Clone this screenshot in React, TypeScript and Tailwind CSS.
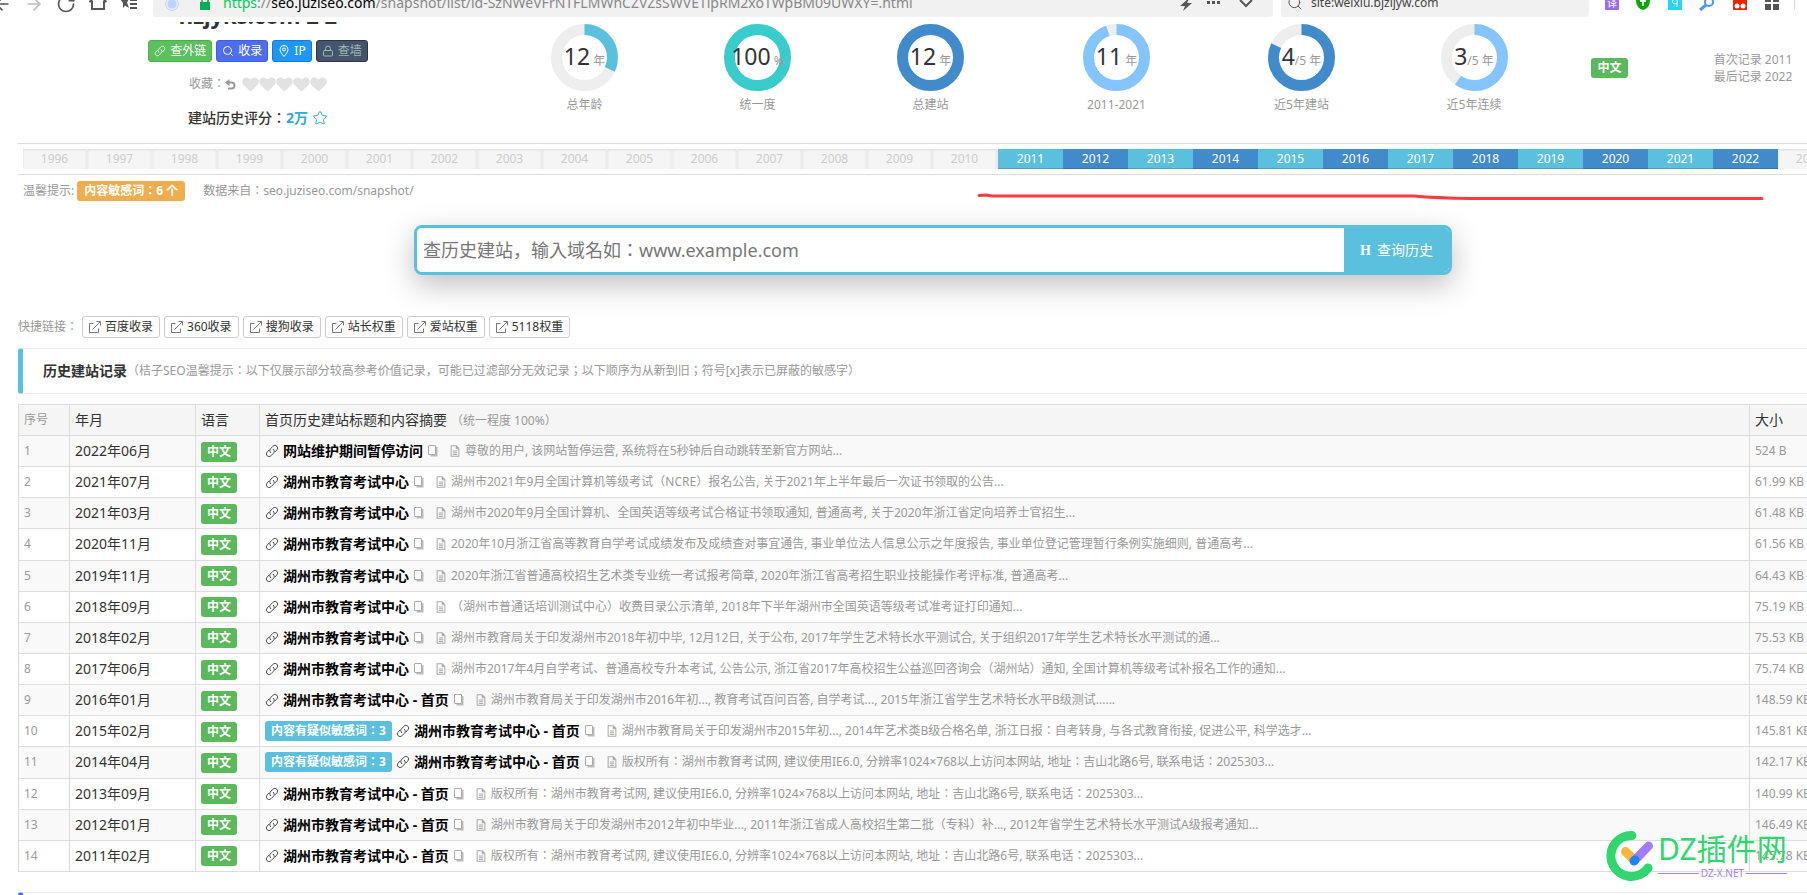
import type { ReactNode } from "react";
import { ArrowLeft, ArrowRight, RotateCw, Search, Lock, Star } from "lucide-react";

type Row = {
  date: string;
  title: string;
  text: string;
  size: string;
  flagged?: number;
};

const CENTER = "湖州市教育考试中心";
const CENTER_HOME = "湖州市教育考试中心 - 首页";
const COPYRIGHT =
  "版权所有：湖州市教育考试网, 建议使用IE6.0, 分辨率1024×768以上访问本网站, 地址：吉山北路6号, 联系电话：2025303...";

const rows: Row[] = [
  { date: "2022年06月", title: "网站维护期间暂停访问", text: "尊敬的用户, 该网站暂停运营, 系统将在5秒钟后自动跳转至新官方网站...", size: "524 B" },
  { date: "2021年07月", title: CENTER, text: "湖州市2021年9月全国计算机等级考试（NCRE）报名公告, 关于2021年上半年最后一次证书领取的公告...", size: "61.99 KB" },
  { date: "2021年03月", title: CENTER, text: "湖州市2020年9月全国计算机、全国英语等级考试合格证书领取通知, 普通高考, 关于2020年浙江省定向培养士官招生...", size: "61.48 KB" },
  { date: "2020年11月", title: CENTER, text: "2020年10月浙江省高等教育自学考试成绩发布及成绩查对事宜通告, 事业单位法人信息公示之年度报告, 事业单位登记管理暂行条例实施细则, 普通高考...", size: "61.56 KB" },
  { date: "2019年11月", title: CENTER, text: "2020年浙江省普通高校招生艺术类专业统一考试报考简章, 2020年浙江省高考招生职业技能操作考评标准, 普通高考...", size: "64.43 KB" },
  { date: "2018年09月", title: CENTER, text: "（湖州市普通话培训测试中心）收费目录公示清单, 2018年下半年湖州市全国英语等级考试准考证打印通知...", size: "75.19 KB" },
  { date: "2018年02月", title: CENTER, text: "湖州市教育局关于印发湖州市2018年初中毕, 12月12日, 关于公布, 2017年学生艺术特长水平测试合, 关于组织2017年学生艺术特长水平测试的通...", size: "75.53 KB" },
  { date: "2017年06月", title: CENTER, text: "湖州市2017年4月自学考试、普通高校专升本考试, 公告公示, 浙江省2017年高校招生公益巡回咨询会（湖州站）通知, 全国计算机等级考试补报名工作的通知...", size: "75.74 KB" },
  { date: "2016年01月", title: CENTER_HOME, text: "湖州市教育局关于印发湖州市2016年初..., 教育考试百问百答, 自学考试..., 2015年浙江省学生艺术特长水平B级测试......", size: "148.59 KB" },
  { date: "2015年02月", title: CENTER_HOME, text: "湖州市教育局关于印发湖州市2015年初..., 2014年艺术类B级合格名单, 浙江日报：自考转身, 与各式教育衔接, 促进公平, 科学选才...", size: "145.81 KB", flagged: 3 },
  { date: "2014年04月", title: CENTER_HOME, text: COPYRIGHT, size: "142.17 KB", flagged: 3 },
  { date: "2013年09月", title: CENTER_HOME, text: COPYRIGHT, size: "140.99 KB" },
  { date: "2012年01月", title: CENTER_HOME, text: "湖州市教育局关于印发湖州市2012年初中毕业..., 2011年浙江省成人高校招生第二批（专科）补..., 2012年省学生艺术特长水平测试A级报考通知...", size: "146.49 KB" },
  { date: "2011年02月", title: CENTER_HOME, text: COPYRIGHT, size: "145.78 KB" },
];

const years = Array.from({ length: 28 }, (_, i) => 1996 + i);

const donuts = [
  { value: "12", unit: " 年", label: "总年龄", percent: 32, color: "#5bc0de" },
  { value: "100", unit: " %", label: "统一度", percent: 100, color: "#39cccc" },
  { value: "12", unit: " 年", label: "总建站", percent: 100, color: "#428bca" },
  { value: "11", unit: " 年", label: "2011-2021", percent: 95, color: "#85c5ff" },
  { value: "4", unit: "/5 年", label: "近5年建站", percent: 82, color: "#428bca" },
  { value: "3", unit: "/5 年", label: "近5年连续", percent: 60, color: "#85c5ff" },
];

const quickLinks = ["百度收录", "360收录", "搜狗收录", "站长权重", "爱站权重", "5118权重"];

function LinkIcon({ className }: { className: string }) {
  return (
    <svg viewBox="0 0 16 16" className={`shrink-0 ${className}`} fill="none" stroke="currentColor" strokeLinecap="round" aria-hidden="true">
      <path d="M6.500 10C5 8.500 5.200 6.800 6.200 5.600L9 2.600C10.300 1.300 12.200 1.300 13.500 2.500C14.700 3.700 14.700 5.500 13.500 6.800L11.500 9" />
      <path d="M9.500 6C11 7.500 10.800 9.200 9.800 10.400L6.900 13.400C5.700 14.600 3.800 14.700 2.500 13.500C1.300 12.300 1.300 10.400 2.500 9.200L4.500 7" />
    </svg>
  );
}

function CopyIcon() {
  return (
    <svg viewBox="0 0 12 14" className="h-3.5 w-3 shrink-0" fill="none" aria-hidden="true">
      <path d="M3.500 11.500H9.500V3" stroke="#bbb" strokeWidth="2" />
      <rect x="1.500" y="1.500" width="7" height="9" rx="0.500" fill="#fff" stroke="#aaa" />
    </svg>
  );
}

function FileIcon() {
  return (
    <svg viewBox="0 0 12 14" className="h-3 w-3 shrink-0" fill="none" stroke="#aaa" strokeWidth="1.200" aria-hidden="true">
      <path d="M1.500 1H7.500L10.500 4V13H1.500ZM7.500 1V4.500H10.500M3.500 7H8.500M3.500 9H8.500M3.500 11H8.500" />
    </svg>
  );
}

function ExternalIcon() {
  return (
    <svg viewBox="0 0 12 12" className="size-3 shrink-0" fill="none" stroke="#777" aria-hidden="true">
      <path d="M4.500 2.500H0.500V11.500H9.500V7.500M3.500 8.500L11 1M7.500 0.500H11.500V4.500" />
    </svg>
  );
}

function HeartIcon() {
  return (
    <svg viewBox="0 0 17 15" className="h-[15px] w-[17px]" fill="#e2e2e2" aria-hidden="true">
      <path d="M8.500 14.500L1.500 8C-0.300 6 0 3.200 1.300 1.800C3.300 -0.200 6.500 0 8.500 2.500C10.500 0 13.700 -0.200 15.700 1.800C17 3.200 17.300 6 15.500 8Z" />
    </svg>
  );
}

function LangBadge() {
  return (
    <span className="inline-block rounded-[3px] bg-[#5cb85c] px-1.5 text-xs/5 font-bold text-white">中文</span>
  );
}

function Donut({ value, unit, label, percent, color }: (typeof donuts)[number]) {
  return (
    <div className="flex flex-col items-center pt-0.5">
      <div className="relative size-[67px]">
        <svg viewBox="0 0 67 67" className="size-full -rotate-90" fill="none" strokeWidth="11" aria-hidden="true">
          <circle cx="33.500" cy="33.500" r="28" stroke="#eee" />
          <circle cx="33.500" cy="33.500" r="28" stroke={color} pathLength="100" strokeDasharray={`${percent} 100`} />
        </svg>
        <div className="absolute inset-0 flex items-baseline justify-center whitespace-pre pt-4 text-[23px]/8 text-[#333]">
          {value}
          <span className="text-xs text-[#999]">{unit}</span>
        </div>
      </div>
      <div className="pt-1 text-xs/5 text-[#999]">{label}</div>
    </div>
  );
}

function Tag({ className, children }: { className: string; children: ReactNode }) {
  return (
    <button type="button" className={`flex h-[22px] items-center gap-1 rounded-[3px] border px-[5px] text-xs ${className}`}>
      {children}
    </button>
  );
}

function BrowserBar() {
  return (
    <header className="flex h-[22px] items-start overflow-hidden bg-white text-[#555]">
      <div className="-mt-1.5 flex w-[153px] shrink-0 gap-3">
        <ArrowLeft className="-ml-2 size-5 shrink-0" />
        <ArrowRight className="size-5 shrink-0 text-[#bbb]" />
        <RotateCw className="size-5 shrink-0" />
        <svg viewBox="0 0 20 20" className="size-5 shrink-0" fill="none" stroke="currentColor" strokeWidth="2" aria-hidden="true">
          <path d="M1.500 8L10 0L18.500 8M4 6V15H16V6" />
        </svg>
        <svg viewBox="0 0 18 18" className="size-[18px] shrink-0" fill="currentColor" aria-hidden="true">
          <path d="M0 5H9L7 8.500L9 14L5 11.500L3 14V9Z" />
          <path d="M10 5H17V7H10ZM10 9H17V11H10ZM10 13H17V15H10Z" />
        </svg>
      </div>
      <div className="mr-2 flex h-[17px] flex-1 items-end rounded-b bg-[#f1f1f1] pl-3">
        <svg viewBox="0 0 14 14" className="mr-5 mb-1.5 size-3.5" aria-hidden="true">
          <circle cx="7" cy="7" r="6.500" fill="#e4ecfb" stroke="#c3d6fb" />
          <circle cx="7" cy="7" r="4.500" fill="#bcd3ff" />
        </svg>
        <svg viewBox="0 0 12 14" className="mr-3 mb-[7px] h-3.5 w-3" fill="#00b050" aria-hidden="true">
          <path d="M1 6H11V14H1Z" />
          <path d="M3 6V3.500A3 3 0 0 1 9 3.500V6" fill="none" stroke="#00b050" strokeWidth="1.500" />
        </svg>
        <span className="mb-0.5 flex-1 text-sm/6 whitespace-nowrap text-[#888]">
          <span className="text-[#0c5]">https</span>://<span className="text-black">seo.juziseo.com</span>
          /snapshot/list/id-SzNWeVFrNTFLMWhCZVZsSWVETlpRM2xoTWpBM09UWXY=.html
        </span>
        <svg viewBox="0 0 92 18" className="mr-2 h-[18px] w-[92px]" aria-hidden="true">
          <path d="M15 0L7 7H12L10 12L19 4H14L16 0Z" fill="#555" />
          <path d="M34 2h3v3h-3zM39 2h3v3h-3zM44 2h3v3h-3z" fill="#555" />
          <path d="M67 1L73 7L79 1" fill="none" stroke="#555" strokeWidth="2" />
        </svg>
      </div>
      <div className="mr-4 flex h-[17px] w-[308px] items-end gap-2 rounded-b bg-[#f1f1f1] pl-1.5">
        <Search className="mb-1.5 size-4" strokeWidth={1.5} />
        <span className="mb-0.5 text-xs/6 text-[#444]">site:weixiu.bjzljyw.com</span>
      </div>
      <svg viewBox="0 0 202 18" className="h-[18px] w-[202px] shrink-0" aria-hidden="true">
        <rect x="0" y="-4" width="14" height="14" rx="1" fill="#9b6bf3" />
        <text x="2" y="7" fontSize="10" fill="#fff">译</text>
        <path d="M31 0h14q0 8-7 10q-7-2-7-10z" fill="#0a0" />
        <path d="M35 1h6M38 1v5" stroke="#fff" strokeWidth="2" />
        <rect x="63" y="-4" width="14" height="14" fill="#2ad4f5" />
        <circle cx="70" cy="1.500" r="2.500" fill="none" stroke="#fff" />
        <path d="M72 1v6" stroke="#fff" />
        <circle cx="104" cy="2" r="4" fill="none" stroke="#4d94ff" strokeWidth="2" />
        <path d="M101 5L95 10" stroke="#4d94ff" strokeWidth="3" />
        <rect x="128" y="-4" width="14" height="14" rx="1" fill="#e20" />
        <circle cx="132" cy="6" r="2.500" fill="#fff" />
        <circle cx="138" cy="6" r="2.500" fill="#fff" />
        <path d="M160-4h6v6h-6zM168-4h6v6h-6zM160 4h6v6h-6zM168 4h6v6h-6z" fill="#555" />
        <path d="M189.500 0V10" stroke="#ddd" />
      </svg>
    </header>
  );
}

function Summary() {
  return (
    <section className="grid h-[122px] grid-cols-[480fr_173fr_173fr_173fr_199fr_171fr_174fr_97fr_190fr] border-b border-[#ddd]">
      <div className="flex flex-col items-center">
        <div className="flex h-2 w-full items-end justify-center overflow-hidden">
          <h1 className="text-[22px]/[30px] font-bold text-[#333]">hzjyks.com 2 2</h1>
        </div>
        <div className="mt-2.5 flex gap-1">
          <Tag className="border-[#4cae4c] bg-[#5cc05c] text-white">
            <LinkIcon className="size-3" /> 查外链
          </Tag>
          <Tag className="border-[#3f5de0] bg-[#4e6ef2] text-white">
            <Search className="size-3" /> 收录
          </Tag>
          <Tag className="border-[#0b7dda] bg-[#2196f3] text-white">
            <svg viewBox="0 0 12 12" className="size-3" fill="none" stroke="currentColor" aria-hidden="true">
              <path d="M6 11.500C3 8 2 6.500 2 4.500A4 4 0 0 1 10 4.500C10 6.500 9 8 6 11.500Z" />
              <circle cx="6" cy="4.500" r="1.500" />
            </svg>
            IP
          </Tag>
          <Tag className="border-[#2b3648] bg-[#44546a] text-[#9fb8b0]">
            <Lock className="size-3" /> 查墙
          </Tag>
        </div>
        <div className="mt-2.5 flex h-6 items-center text-xs text-[#999]">
          收藏：
          <svg viewBox="0 0 11 11" className="mr-1.5 size-[11px]" fill="none" stroke="#999" strokeWidth="2" aria-hidden="true">
            <path d="M3 9.500H6.500A3 3 0 0 0 6.500 3.500H2.500" />
            <path d="M0 3.500L4.500 0V7Z" fill="#999" stroke="none" />
          </svg>
          {[1, 2, 3, 4, 5].map((n) => (
            <HeartIcon key={n} />
          ))}
        </div>
        <div className="mt-2.5 flex h-6 items-center text-sm font-medium text-[#333]">
          建站历史评分：<span className="font-bold text-[#31a9d4]">2万</span>
          <Star className="ml-1 size-4 text-[#31a9d4]" strokeWidth={1.5} />
        </div>
      </div>
      {donuts.map((d) => (
        <Donut key={d.label} {...d} />
      ))}
      <div className="flex items-start justify-center pt-9">
        <LangBadge />
      </div>
      <div className="pt-[29px] text-center text-xs/[17px] text-[#999]">
        首次记录 2011
        <br />
        最后记录 2022
      </div>
    </section>
  );
}

function Timeline() {
  return (
    <div className="grid auto-cols-fr grid-flow-col border-b border-[#ddd] p-[5px]">
      {years.map((year) => {
        const active = year >= 2011 && year <= 2022;
        const color = !active
          ? "border-r-2 border-[#ebebeb] bg-[#f5f5f5] text-[#ccc] shadow-[inset_0_1px_2px_rgba(0,0,0,0.1)]"
          : year % 2
            ? "bg-[#5bc0de] text-white shadow-[inset_0_-1px_0_rgba(0,0,0,0.15)]"
            : "bg-[#428bca] text-white shadow-[inset_0_-1px_0_rgba(0,0,0,0.15)]";
        return (
          <div key={year} className={`h-5 text-center text-xs/5 ${color}`}>
            {year}
          </div>
        );
      })}
    </div>
  );
}

// hand drawn underline below the highlighted years
function RedMark() {
  return (
    <svg viewBox="0 0 790 12" className="absolute top-[192px] left-[976px] h-3 w-[790px]" fill="none" stroke="#ff3b3b" strokeWidth="3" strokeLinecap="round" aria-hidden="true">
      <path d="M3 3.500L10 3L16 4H438Q460 6 494 6.500H786" />
    </svg>
  );
}

function Watermark() {
  return (
    <div className="absolute top-[829px] left-[1606px] flex items-center">
      <svg viewBox="0 0 50 52" className="h-[52px] w-[50px]" fill="none" strokeLinecap="round" aria-hidden="true">
        <path d="M26 6.500A20.500 20.500 0 1 0 42 39" stroke="#32d66e" strokeWidth="9" />
        <path d="M19.500 22.500L27 30" stroke="#ffb638" strokeWidth="9" />
        <path d="M42.500 17L29 31" stroke="#a17dff" strokeWidth="9" />
        <path d="M28 32L29 31" stroke="#1b84ff" strokeWidth="9" />
      </svg>
      <div className="ml-0.5">
        <div className="text-[30px]/9 whitespace-nowrap text-[#32d66e]">DZ插件网</div>
        <div className="flex items-center gap-0.5 text-[10px]/3 text-[#a17dff]">
          <span className="h-px flex-1 bg-[#a17dff]" />
          DZ-X.NET
          <span className="h-px flex-1 bg-[#a17dff]" />
        </div>
      </div>
    </div>
  );
}

export default function App() {
  return (
    <div className="relative h-screen overflow-hidden bg-white font-['Noto_Sans','Noto_Sans_CJK_JP','Noto_Sans_CJK_SC',sans-serif] text-[#333]">
      <BrowserBar />
      <main className="-mr-[41px] pl-[18px]">
        <Summary />
        <Timeline />

        <div className="flex h-8 items-center pl-[5px] text-xs text-[#999]">
          温馨提示:
          <span className="ml-[3px] rounded-[3px] bg-[#f0ad4e] px-[7px] text-xs/5 font-bold text-white">内容敏感词：6 个</span>
          <span className="ml-[18px]">数据来自：seo.juziseo.com/snapshot/</span>
        </div>

        <form
          className="mx-auto mt-[18px] flex h-[50px] w-[1038px] overflow-hidden rounded-lg border-3 border-[#5bc0de] shadow-[0_10px_30px_rgba(0,0,0,0.25)]"
          onSubmit={(e) => e.preventDefault()}
        >
          <input
            type="text"
            aria-label="域名"
            placeholder="查历史建站，输入域名如：www.example.com"
            className="flex-1 bg-white px-1.5 text-lg outline-none placeholder:text-[#777]"
          />
          <button type="submit" className="w-[105px] bg-[#5bc0de] text-sm text-white">
            <span className="mr-1.5 font-['Liberation_Serif',serif] font-bold">H</span>
            查询历史
          </button>
        </form>

        <div className="mt-[41px] flex h-[22px] items-center gap-1 text-xs text-[#999]">
          <span>快捷链接：</span>
          {quickLinks.map((label) => (
            <a key={label} href="#" className="flex h-[22px] items-center gap-1 rounded-[3px] border border-[#ccc] px-1.5 text-[#333]">
              <ExternalIcon />
              {label}
            </a>
          ))}
        </div>

        <div className="mt-2.5 flex h-[46px] items-center rounded-[3px] border-y border-l-5 border-y-[#eee] border-l-[#5bc0de] pl-5">
          <h2 className="text-sm font-bold">历史建站记录</h2>
          <span className="text-xs text-[#999]">
            （桔子SEO温馨提示：以下仅展示部分较高参考价值记录，可能已过滤部分无效记录；以下顺序为从新到旧；符号[x]表示已屏蔽的敏感字）
          </span>
        </div>

        <table className="mt-2.5 h-[468px] w-full table-fixed border-collapse text-left text-sm/5 [&_td]:border [&_td]:border-[#ddd] [&_td]:px-[5px] [&_th]:border [&_th]:border-[#ddd] [&_th]:px-[5px] [&_th]:font-normal [&_tr]:h-[31px]">
          <colgroup>
            <col className="w-[51px]" />
            <col className="w-[126px]" />
            <col className="w-[64px]" />
            <col />
            <col className="w-[98px]" />
          </colgroup>
          <thead>
            <tr className="bg-[#f5f5f5]">
              <th className="text-xs text-[#999]">序号</th>
              <th>年月</th>
              <th>语言</th>
              <th>
                首页历史建站标题和内容摘要
                <span className="ml-1 text-xs text-[#999]">（统一程度 100%）</span>
              </th>
              <th>大小</th>
            </tr>
          </thead>
          <tbody>
            {rows.map((row, i) => (
              <tr key={row.date} className="odd:bg-[#f9f9f9]">
                <td className="text-xs text-[#999]">{i + 1}</td>
                <td>{row.date}</td>
                <td>
                  <LangBadge />
                </td>
                <td>
                  <div className="flex items-center whitespace-nowrap">
                    {row.flagged && (
                      <span className="mr-1 rounded-[3px] bg-[#5bc0de] px-1.5 text-xs/5 font-bold text-white">
                        内容有疑似敏感词：{row.flagged}
                      </span>
                    )}
                    <LinkIcon className="mr-1 size-3.5" />
                    <a href="#" className="mr-1 font-bold text-black">{row.title}</a>
                    <CopyIcon />
                    <span className="ml-2.5 flex items-center gap-1 text-xs text-[#999]">
                      <FileIcon />
                      {row.text}
                    </span>
                  </div>
                </td>
                <td className="text-xs text-[#999]">{row.size}</td>
              </tr>
            ))}
          </tbody>
        </table>

        <div className="mt-5 h-[46px] rounded-[3px] border-t border-l-5 border-t-[#eee] border-l-[#4e6ef2]" />
      </main>
      <RedMark />
      <Watermark />
    </div>
  );
}
